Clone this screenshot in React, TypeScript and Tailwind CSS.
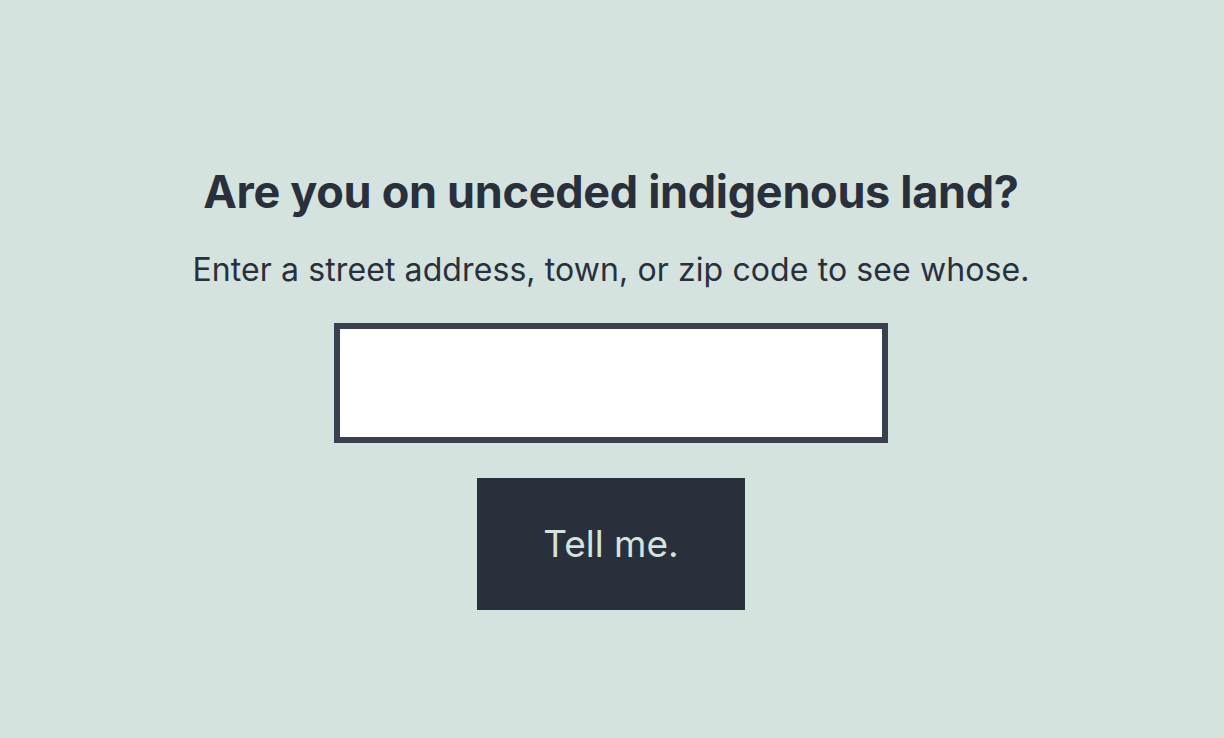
export default function App() {
  return (
    <div className="min-h-[738px] w-full bg-[#d4e3de] font-['Inter',sans-serif] text-[#29303c]">
      <div className="flex flex-col items-center pr-[2px] pt-[169px]">
        <h1 className="text-[45px] font-bold leading-none tracking-[-0.3px]">
          Are you on unceded indigenous land?
        </h1>
        <p className="mt-[40px] text-[32px] leading-none tracking-[0.1px]">
          Enter a street address, town, or zip code to see whose.
        </p>
        <input
          type="text"
          className="mt-[37px] h-[120px] w-[554px] border-[6px] border-[#3a404d] bg-white px-4 text-[30px] outline-none"
        />
        <button className="mt-[35px] h-[132px] w-[268px] bg-[#29303c] text-[37px] text-[#d4e3de]">
          Tell me.
        </button>
      </div>
    </div>
  )
}
